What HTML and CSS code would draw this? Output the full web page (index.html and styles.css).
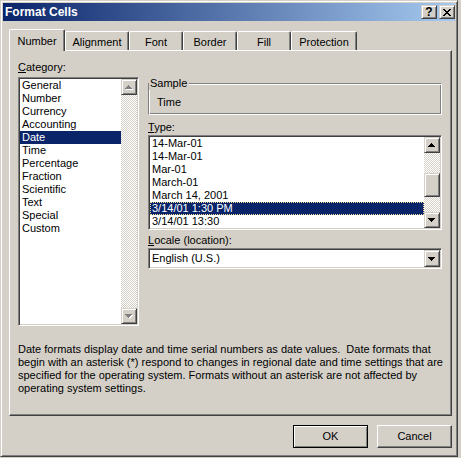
FILE: index.html
```html
<!DOCTYPE html>
<html>
<head>
<meta charset="utf-8">
<title>Format Cells</title>
<link rel="stylesheet" href="styles.css">
</head>
<body>
<div class="window">
  <div class="titlebar">
    <span class="title">Format Cells</span>
    <div class="tbtns">
      <span class="tbtn help">?</span>
      <span class="tbtn close"><svg width="8" height="7" viewBox="0 0 8 7"><path d="M0 0h2v1H0zM6 0h2v1H6zM1 1h2v1H1zM5 1h2v1H5zM2 2h4v1H2zM3 3h2v1H3zM2 4h4v1H2zM1 5h2v1H1zM5 5h2v1H5zM0 6h2v1H0zM6 6h2v1H6z" fill="#000"/></svg></span>
    </div>
  </div>
  <div class="content">
    <div class="tabs">
      <div class="tab active w-number">Number</div>
      <div class="tab w-align">Alignment</div>
      <div class="tab w-font">Font</div>
      <div class="tab w-border">Border</div>
      <div class="tab w-fill">Fill</div>
      <div class="tab w-prot">Protection</div>
    </div>
    <div class="panel">
      <div class="main">
        <div class="leftcol">
          <div class="label"><u>C</u>ategory:</div>
          <div class="listbox cat">
            <ul class="items">
              <li>General</li>
              <li>Number</li>
              <li>Currency</li>
              <li>Accounting</li>
              <li class="sel">Date</li>
              <li>Time</li>
              <li>Percentage</li>
              <li>Fraction</li>
              <li>Scientific</li>
              <li>Text</li>
              <li>Special</li>
              <li>Custom</li>
            </ul>
            <div class="vscroll">
              <div class="sbtn"><svg class="arr-dis" width="9" height="5" viewBox="0 0 9 5"><path d="M4 1h1v1H4zM3 2h3v1H3zM2 3h5v1H2zM1 4h7v1H1z" fill="#fff"/><path d="M3 0h1v1H3zM2 1h3v1H2zM1 2h5v1H1zM0 3h7v1H0z" fill="#808080"/></svg></div>
              <div class="track"></div>
              <div class="sbtn"><svg class="arr-dis" width="9" height="5" viewBox="0 0 9 5"><path d="M1 1h7v1H1zM2 2h5v1H2zM3 3h3v1H3zM4 4h1v1H4z" fill="#fff"/><path d="M0 0h7v1H0zM1 1h5v1H1zM2 2h3v1H2zM3 3h1v1H3z" fill="#808080"/></svg></div>
            </div>
          </div>
        </div>
        <div class="rightcol">
          <fieldset class="group">
            <legend>Sample</legend>
            <div class="sample">Time</div>
          </fieldset>
          <div class="label type-label"><u>T</u>ype:</div>
          <div class="listbox typelist">
            <ul class="items">
              <li>14-Mar-01</li>
              <li>14-Mar-01</li>
              <li>Mar-01</li>
              <li>March-01</li>
              <li>March 14, 2001</li>
              <li class="sel focus">3/14/01 1:30 PM</li>
              <li>3/14/01 13:30</li>
            </ul>
            <div class="vscroll">
              <div class="sbtn"><svg class="arr" width="8" height="4" viewBox="0 0 8 4"><path d="M3 0h1v1H3zM2 1h3v1H2zM1 2h5v1H1zM0 3h7v1H0z" fill="#000"/></svg></div>
              <div class="track"><div class="thumb"></div></div>
              <div class="sbtn"><svg class="arr" width="8" height="4" viewBox="0 0 8 4"><path d="M0 0h7v1H0zM1 1h5v1H1zM2 2h3v1H2zM3 3h1v1H3z" fill="#000"/></svg></div>
            </div>
          </div>
          <div class="label locale-label"><u>L</u>ocale (location):</div>
          <div class="combo">
            <div class="combo-text">English (U.S.)</div>
            <div class="sbtn cbtn"><svg class="arr" width="8" height="4" viewBox="0 0 8 4"><path d="M0 0h7v1H0zM1 1h5v1H1zM2 2h3v1H2zM3 3h1v1H3z" fill="#000"/></svg></div>
          </div>
        </div>
      </div>
      <p class="desc">Date formats display date and time serial numbers as date values.&nbsp; Date formats that<br>begin with an asterisk (*) respond to changes in regional date and time settings that are<br>specified for the operating system. Formats without an asterisk are not affected by<br>operating system settings.</p>
    </div>
    <div class="buttons">
      <button class="btn default">OK</button>
      <button class="btn">Cancel</button>
    </div>
  </div>
</div>
</body>
</html>
```

FILE: styles.css
```css
html, body {
  margin: 0;
  padding: 0;
  background: #d4d0c8;
}
body {
  font: 11px/13px "Liberation Sans", Arial, sans-serif;
  color: #000;
}
.window {
  width: 458px;
  height: 457px;
  box-sizing: border-box;
  border: 1px solid;
  border-color: #d4d0c8 #404040 #404040 #d4d0c8;
  box-shadow: inset 1px 1px #fff, inset -1px -1px #808080;
  padding: 2px;
  display: flex;
  flex-direction: column;
  background: #d4d0c8;
}
.titlebar {
  height: 18px;
  flex: none;
  display: flex;
  align-items: center;
  background: linear-gradient(to right, #0a246a, #a6caf0);
  color: #fff;
  padding-left: 2px;
}
.title {
  flex: 1;
  font-weight: bold;
  font-size: 12px;
  line-height: 14px;
}
.tbtns {
  display: flex;
  gap: 2px;
  align-self: flex-start;
  margin-top: 2px;
}
.tbtn {
  width: 16px;
  height: 14px;
  box-sizing: border-box;
  background: #d4d0c8;
  border: 1px solid;
  border-color: #d4d0c8 #404040 #404040 #d4d0c8;
  box-shadow: inset 1px 1px #fff, inset -1px -1px #808080;
  display: flex;
  align-items: center;
  justify-content: center;
  color: #000;
}
.tbtn.help {
  font-weight: bold;
  font-size: 12px;
  line-height: 12px;
}
.tbtn svg { display: block; }
.content {
  flex: 1;
  padding: 8px 3px 0 6px;
}
.tabs {
  display: flex;
  align-items: flex-end;
  height: 22px;
  margin-bottom: -1px;
  position: relative;
  z-index: 1;
}
.tab {
  box-sizing: border-box;
  height: 19px;
  margin-bottom: 1px;
  border-top: 1px solid #fff;
  border-left: 1px solid #fff;
  border-right: 1px solid #404040;
  box-shadow: inset -1px 0 #808080;
  border-radius: 2px 2px 0 0;
  text-align: center;
  padding-top: 4px;
  background: #d4d0c8;
  white-space: nowrap;
}
.tab.active {
  height: 22px;
  margin-bottom: 0;
  padding-top: 5px;
}
.w-number { width: 56px; }
.w-align { width: 64px; }
.w-font { width: 54px; }
.w-border { width: 54px; }
.w-fill { width: 54px; }
.w-prot { width: 66px; }
.panel {
  height: 366px;
  box-sizing: border-box;
  border: 1px solid;
  border-color: #fff #404040 #404040 #fff;
  box-shadow: inset -1px -1px #808080;
  padding: 10px 9px 0 8px;
}
.main {
  display: flex;
  gap: 9px;
  align-items: flex-start;
}
.leftcol { width: 121px; }
.rightcol { width: 294px; }
.label {
  height: 13px;
  white-space: nowrap;
}
.listbox {
  box-sizing: border-box;
  border: 1px solid;
  border-color: #808080 #fff #fff #808080;
  box-shadow: inset 1px 1px #404040, inset -1px -1px #d4d0c8;
  padding: 1px;
  background: #fff;
  display: flex;
}
.cat {
  margin-top: 3px;
  height: 249px;
}
.items {
  flex: 1;
  list-style: none;
  margin: 0;
  padding: 0;
  overflow: hidden;
}
.items li {
  height: 13px;
  padding-left: 2px;
  white-space: nowrap;
}
.items li.sel {
  background: #0a246a;
  color: #fff;
}
.items li.focus {
  outline: 1px dotted #f5db95;
  outline-offset: -1px;
}
.vscroll {
  width: 16px;
  flex: none;
  display: flex;
  flex-direction: column;
  background: repeating-conic-gradient(#fff 0 25%, #d4d0c8 0 50%) 0 0 / 2px 2px;
}
.sbtn {
  width: 16px;
  height: 16px;
  flex: none;
  box-sizing: border-box;
  background: #d4d0c8;
  border: 1px solid;
  border-color: #d4d0c8 #404040 #404040 #d4d0c8;
  box-shadow: inset 1px 1px #fff, inset -1px -1px #808080;
  display: flex;
  align-items: center;
  justify-content: center;
}
.sbtn svg { display: block; }
.track { flex: 1; }
.thumb {
  height: 24px;
  margin-top: 20px;
  box-sizing: border-box;
  background: #d4d0c8;
  border: 1px solid;
  border-color: #d4d0c8 #404040 #404040 #d4d0c8;
  box-shadow: inset 1px 1px #fff, inset -1px -1px #808080;
}
.group {
  margin: 16px 0 0;
  padding: 0;
  min-width: 0;
  border: 1px solid;
  border-color: #808080 #fff #fff #808080;
  box-shadow: inset 1px 1px #fff, inset -1px -1px #808080;
}
.group legend {
  padding: 0 2px 0 1px;
  margin-left: 0;
  background: #d4d0c8;
  line-height: 13px;
}
.sample {
  padding: 6px 0 5px 8px;
}
.type-label { margin-top: 6px; }
.typelist {
  margin-top: 1px;
  height: 95px;
}
.locale-label { margin-top: 4px; }
.combo {
  margin-top: 1px;
  height: 21px;
  box-sizing: border-box;
  border: 1px solid;
  border-color: #808080 #fff #fff #808080;
  box-shadow: inset 1px 1px #404040, inset -1px -1px #d4d0c8;
  padding: 1px;
  background: #fff;
  display: flex;
}
.combo-text {
  flex: 1;
  padding-left: 2px;
  line-height: 17px;
}
.cbtn { height: 17px; }
.desc {
  margin: 17px 0 0;
  white-space: nowrap;
}
.buttons {
  display: flex;
  justify-content: flex-end;
  gap: 9px;
  margin-top: 9px;
}
.btn {
  width: 75px;
  height: 23px;
  box-sizing: border-box;
  font: inherit;
  color: #000;
  background: #d4d0c8;
  border: 1px solid;
  border-color: #fff #404040 #404040 #fff;
  box-shadow: inset -1px -1px #808080;
  padding: 0;
  margin: 0;
}
.btn.default {
  border-color: #000;
  box-shadow: inset 1px 1px #fff, inset -1px -1px #808080;
}
```
